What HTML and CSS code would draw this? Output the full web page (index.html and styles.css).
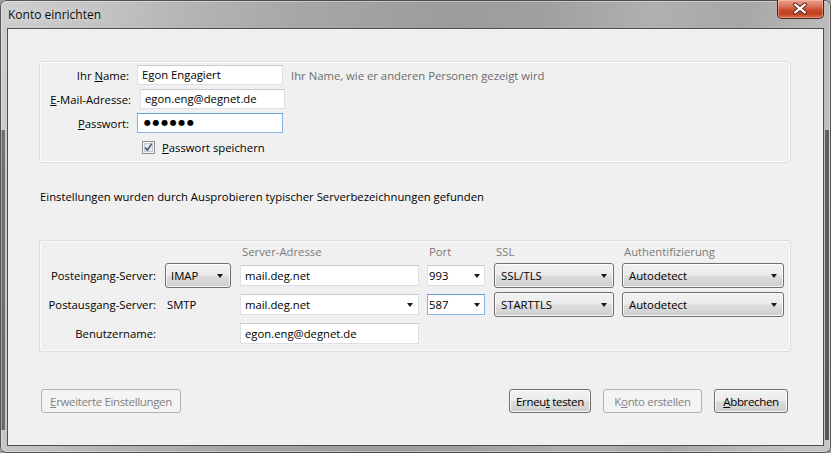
FILE: index.html
```html
<!DOCTYPE html>
<html lang="de">
<head>
<meta charset="utf-8">
<title>Konto einrichten</title>
<link rel="stylesheet" href="styles.css">
</head>
<body>
<div class="window">
  <div class="titlebar">
    <span class="title">Konto einrichten</span>
    <div class="close">
      <svg width="47" height="19" viewBox="0 0 47 19">
        <path d="M18.5 5.5 L28.5 13.5 M28.5 5.5 L18.5 13.5" stroke="#5b2418" stroke-width="4.2" stroke-linecap="round"/>
        <path d="M18.5 5.5 L28.5 13.5 M28.5 5.5 L18.5 13.5" stroke="#ffffff" stroke-width="2.3" stroke-linecap="round"/>
      </svg>
    </div>
  </div>
  <div class="client">
    <div class="group ident">
      <div class="lbl">Ihr <u>N</u>ame:</div>
      <div class="field">Egon Engagiert</div>
      <div class="hint">Ihr Name, wie er anderen Personen gezeigt wird</div>

      <div class="lbl lbl-shift"><u>E</u>-Mail-Adresse:</div>
      <div class="field field-shift">egon.eng@degnet.de</div>
      <div></div>

      <div class="lbl"><u>P</u>asswort:</div>
      <div class="field focus dots">●●●●●●</div>
      <div></div>

      <div></div>
      <div class="check">
        <span class="box">
          <svg width="13" height="13" viewBox="0 0 13 13">
            <rect x="0.5" y="0.5" width="12" height="12" fill="#f4f4f4" stroke="#8e8f8f"/>
            <rect x="2.5" y="2.5" width="8" height="8" fill="#e6e9ee" stroke="#c4c9d2"/>
            <path d="M3.2 6.6 L5.4 9.2 L9.8 2.6" fill="none" stroke="#4a5a7c" stroke-width="1.7"/>
          </svg>
        </span>
        <span><u>P</u>asswort speichern</span>
      </div>
      <div></div>
    </div>

    <p class="info">Einstellungen wurden durch Ausprobieren typischer Serverbezeichnungen gefunden</p>

    <div class="group servers">
      <div></div>
      <div></div>
      <div class="hdr">Server-Adresse</div>
      <div class="hdr">Port</div>
      <div class="hdr">SSL</div>
      <div class="hdr">Authentifizierung</div>

      <div class="slbl">Posteingang-Server:</div>
      <div class="menu w-type"><span>IMAP</span><i class="arrow"></i></div>
      <div class="field w-server">mail.deg.net</div>
      <div class="field combo w-port"><span>993</span><i class="arrow"></i></div>
      <div class="menu w-ssl"><span>SSL/TLS</span><i class="arrow"></i></div>
      <div class="menu w-auth"><span>Autodetect</span><i class="arrow"></i></div>

      <div class="slbl">Postausgang-Server:</div>
      <div class="plain">SMTP</div>
      <div class="field combo w-server"><span>mail.deg.net</span><i class="arrow"></i></div>
      <div class="field combo focus w-port"><span>587</span><i class="arrow"></i></div>
      <div class="menu w-ssl"><span>STARTTLS</span><i class="arrow"></i></div>
      <div class="menu w-auth"><span>Autodetect</span><i class="arrow"></i></div>

      <div class="slbl">Benutzername:</div>
      <div></div>
      <div class="field w-server">egon.eng@degnet.de</div>
      <div></div>
      <div></div>
      <div></div>
    </div>

    <div class="actions">
      <button class="btn disabled w-adv"><u>E</u>rweiterte Einstellungen</button>
      <span class="spacer"></span>
      <button class="btn w-retry">Erneu<u>t</u> testen</button>
      <button class="btn disabled w-create">K<u>o</u>nto erstellen</button>
      <button class="btn w-cancel"><u>A</u>bbrechen</button>
    </div>
  </div>
</div>
</body>
</html>
```

FILE: styles.css
```css
* { box-sizing: border-box; }

html, body {
  margin: 0;
  padding: 0;
  width: 831px;
  height: 453px;
  overflow: hidden;
  background: #9f9f9f;
}

.window {
  width: 831px;
  height: 453px;
  border-radius: 6px;
  box-shadow: inset 0 0 0 1px rgba(40, 40, 40, 0.75), inset 0 0 0 2px rgba(255, 255, 255, 0.35);
  background:
    linear-gradient(#727272, #6a6a6a) 1px 130px / 4px 300px no-repeat,
    linear-gradient(#5f5f5f, #585858) 825px 130px / 4px 310px no-repeat,
    linear-gradient(100deg, #cfcfcf 0%, #c2c2c2 12%, #b3b3b3 22%, #a6a6a6 34%, #9c9c9c 50%, #a0a0a0 60%, #b0b0b0 72%, #a7a7a7 82%, #bdbdbd 92%, #c6c6c6 100%);
  font-family: "Open Sans", "Noto Sans", sans-serif;
  font-size: 11.3px;
  color: #000;
  display: flex;
  flex-direction: column;
}

/* ---------- title bar ---------- */
.titlebar {
  height: 28px;
  display: flex;
  align-items: flex-start;
  padding-left: 8px;
  padding-right: 7px;
}

.title {
  margin-top: 7px;
  font-size: 12px;
  line-height: 16px;
  color: #0c0c0c;
  text-shadow: 0 0 6px rgba(255, 255, 255, 0.8);
}

.close {
  margin-left: auto;
  width: 47px;
  height: 19px;
  border: 1px solid #4a2219;
  border-top: none;
  border-radius: 0 0 5px 5px;
  background: linear-gradient(#e8a08e 0%, #d9735c 35%, #c94a2f 55%, #c2401f 75%, #d8694c 100%);
  box-shadow: inset 0 0 0 1px rgba(255, 210, 190, 0.45);
  display: flex;
}

.close svg { display: block; margin: -1px 0 0 -1px; }

/* ---------- client area ---------- */
.client {
  margin-left: 7px;
  width: 817px;
  height: 418px;
  border: 1px solid #4f4f4f;
  background: #f0f0f0;
  padding: 32px 0 0 31px;
}

.group {
  width: 752px;
  border: 1px solid #d5dfe5;
  border-radius: 3px;
  box-shadow: inset 0 0 0 1px #fbfcfd;
}

/* identity group */
.ident {
  height: 102px;
  display: grid;
  grid-template-columns: 89px 146px 1fr;
  grid-template-rows: 20px 20px 20px 18px;
  column-gap: 8px;
  row-gap: 4px;
  align-items: center;
  padding-top: 3px;
}

.lbl {
  text-align: right;
  white-space: nowrap;
}

.lbl-shift { margin-right: -2px; }

.field {
  height: 20px;
  background: #fff;
  border: 1px solid #dcdfe3;
  border-top-color: #c9cdd2;
  padding: 0 4px;
  display: flex;
  align-items: center;
  white-space: nowrap;
  line-height: 16px;
}

.field-shift { margin-left: 3px; width: 145px; }

.focus {
  border-color: #85b3e4;
  border-top-color: #6a9fd8;
}

.dots {
  font-family: "DejaVu Sans", sans-serif;
  font-size: 8px;
  letter-spacing: 1.6px;
  padding-left: 6px;
}

.hint {
  color: #6d6d6d;
  white-space: nowrap;
}

.check {
  display: flex;
  align-items: center;
  gap: 7px;
  padding-left: 5px;
  margin-top: 2px;
}

.box { display: flex; }
.box svg { display: block; }

.info {
  margin: 26px 0 0 1px;
  line-height: 16px;
  height: 16px;
}

/* servers group */
.servers {
  margin-top: 35px;
  height: 112px;
  display: grid;
  grid-template-columns: 125px 75px 187px 67px 128px 1fr;
  grid-template-rows: 15px 25px 25px 25px;
  row-gap: 4px;
  align-items: center;
  padding-top: 3px;
}

.hdr {
  color: #7b7b7b;
  padding-left: 2px;
  white-space: nowrap;
  align-self: end;
}

.slbl {
  text-align: right;
  padding-right: 9px;
  white-space: nowrap;
}

.plain { padding-left: 2px; }

.w-type { width: 66px; }
.w-server { width: 179px; height: 21px; padding-left: 4px; }
.w-port { width: 58px; height: 21px; padding-left: 1px; }
.w-ssl { width: 120px; }
.w-auth { width: 162px; }

.menu {
  height: 25px;
  border: 1px solid #707070;
  border-radius: 3px;
  background: linear-gradient(#f2f2f2 0%, #ebebeb 48%, #dddddd 52%, #cfcfcf 100%);
  box-shadow: inset 0 0 0 1px rgba(255, 255, 255, 0.75);
  display: flex;
  align-items: center;
  justify-content: space-between;
  padding: 0 7px 0 5px;
  white-space: nowrap;
}

.w-ssl, .w-auth { padding-left: 6px; padding-right: 6px; }

.combo {
  justify-content: space-between;
}

.w-port.combo { padding-right: 4px; }
.w-server.combo { padding-right: 5px; }

.arrow {
  display: block;
  width: 0;
  height: 0;
  border-left: 3.5px solid transparent;
  border-right: 3.5px solid transparent;
  border-top: 4px solid #1a1a1a;
}

/* ---------- actions ---------- */
.actions {
  margin-top: 37px;
  width: 752px;
  display: flex;
  gap: 12px;
  padding-left: 2px;
  padding-right: 3px;
}

.spacer { flex: 1; }

.btn {
  height: 24px;
  font-family: inherit;
  font-size: 11.5px;
  letter-spacing: -0.35px;
  color: #000;
  border: 1px solid #707070;
  border-radius: 3px;
  background: linear-gradient(#f2f2f2 0%, #ebebeb 48%, #dddddd 52%, #cfcfcf 100%);
  box-shadow: inset 0 0 0 1px rgba(255, 255, 255, 0.75);
  padding: 0;
  text-align: center;
  white-space: nowrap;
}

.btn.disabled {
  color: #838383;
  border-color: #adb2b5;
  background: #f4f4f4;
  box-shadow: none;
}

.w-adv { width: 140px; }
.w-retry { width: 82px; }
.w-create { width: 99px; }
.w-cancel { width: 74px; }
```
